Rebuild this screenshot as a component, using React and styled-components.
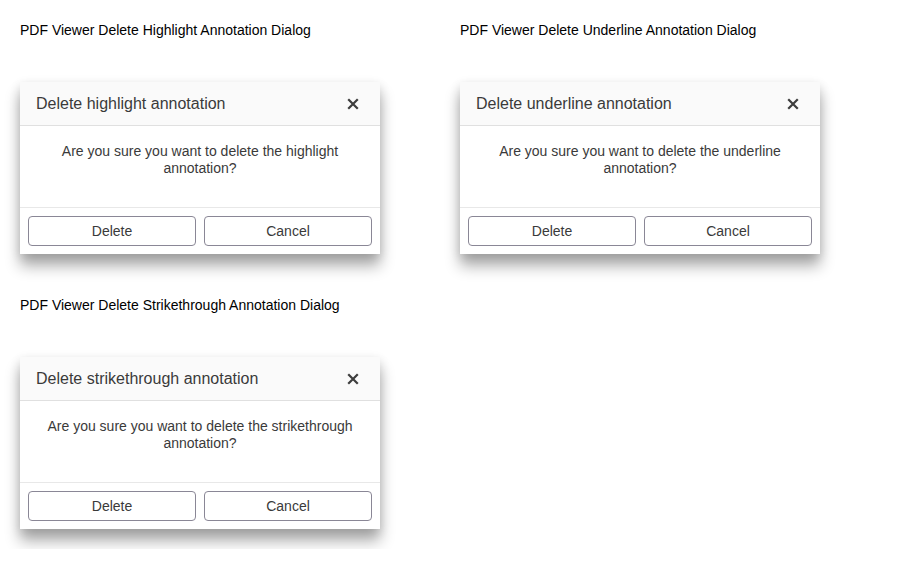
import React from 'react';
import styled, { createGlobalStyle } from 'styled-components';

const GlobalStyle = createGlobalStyle`
  body {
    margin: 0;
    background: #fff;
    font-family: "Liberation Sans", Arial, sans-serif;
  }
`;

const Page = styled.div`
  display: grid;
  grid-template-columns: 440px 440px;
  row-gap: 41px;
  padding: 20px;
`;

const Section = styled.section`
  display: flex;
  flex-direction: column;
  gap: 42px;
`;

const Label = styled.div`
  font-size: 14px;
  line-height: 20px;
  color: #000;
`;

const Dialog = styled.div`
  width: 360px;
  background: #fff;
  box-shadow: 0 3px 10px rgba(0, 0, 0, 0.12), 0 12px 14px rgba(0, 0, 0, 0.32);
`;

const Header = styled.div`
  display: flex;
  align-items: center;
  justify-content: space-between;
  height: 43px;
  padding: 0 17px 0 16px;
  background: #fafafa;
  border-bottom: 1px solid #e0e0e0;
`;

const Title = styled.div`
  font-size: 16px;
  color: #3a3a3a;
`;

const CloseButton = styled.button`
  display: flex;
  align-items: center;
  justify-content: center;
  width: 20px;
  height: 20px;
  padding: 0;
  border: none;
  background: transparent;
  cursor: pointer;
`;

const Body = styled.div`
  height: 82px;
  box-sizing: border-box;
  padding: 17px 24px;
  font-size: 14px;
  line-height: 17px;
  color: #3a3a3a;
  text-align: center;
  border-bottom: 1px solid #e8e8e8;
`;

const Footer = styled.div`
  display: grid;
  grid-template-columns: 1fr 1fr;
  gap: 8px;
  padding: 8px;
`;

const Button = styled.button`
  height: 30px;
  border: 1px solid #8a8796;
  border-radius: 4px;
  background: #fff;
  font-family: inherit;
  font-size: 14px;
  color: #3a3a3a;
  cursor: pointer;
`;

function CloseIcon() {
  return (
    <svg width="12" height="12" viewBox="0 0 12 12">
      <path d="M2 2 L10 10 M10 2 L2 10" stroke="#3d3d3d" strokeWidth="2.2" strokeLinecap="square" />
    </svg>
  );
}

function DeleteDialog({ kind }) {
  return (
    <Dialog>
      <Header>
        <Title>Delete {kind} annotation</Title>
        <CloseButton aria-label="Close">
          <CloseIcon />
        </CloseButton>
      </Header>
      <Body>Are you sure you want to delete the {kind} annotation?</Body>
      <Footer>
        <Button>Delete</Button>
        <Button>Cancel</Button>
      </Footer>
    </Dialog>
  );
}

const dialogs = [
  { label: 'Highlight', kind: 'highlight' },
  { label: 'Underline', kind: 'underline' },
  { label: 'Strikethrough', kind: 'strikethrough' },
];

export default function App() {
  return (
    <>
      <GlobalStyle />
      <Page>
        {dialogs.map((d) => (
          <Section key={d.kind}>
            <Label>PDF Viewer Delete {d.label} Annotation Dialog</Label>
            <DeleteDialog kind={d.kind} />
          </Section>
        ))}
      </Page>
    </>
  );
}
